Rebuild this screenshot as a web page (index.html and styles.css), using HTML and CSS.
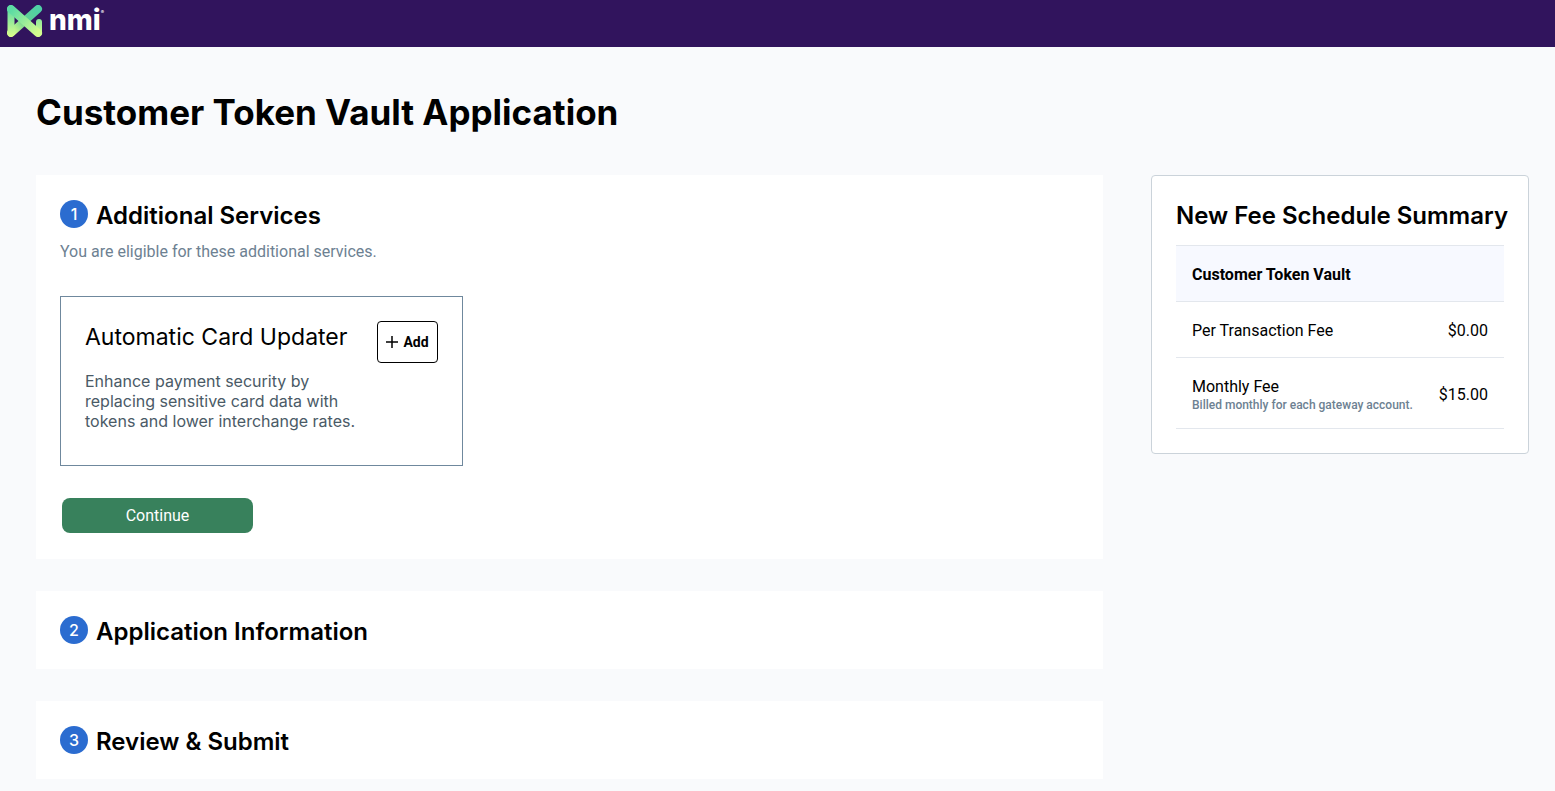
FILE: index.html
```html
<!DOCTYPE html>
<html lang="en">
<head>
    <meta charset="utf-8">
    <title>Customer Token Vault Application</title>
    <link rel="stylesheet" href="styles.css">
</head>
<body>
    <header class="topbar">
        <a class="logo" href="#">
            <svg class="logo-mark" viewBox="0 0 36 32" width="36" height="32" fill="none" stroke-linecap="round" aria-hidden="true">
                <defs>
                    <linearGradient id="down" gradientUnits="userSpaceOnUse" x1="0" y1="0" x2="0" y2="32">
                        <stop offset="0" stop-color="#4fd6a8"/>
                        <stop offset="1" stop-color="#ddff8c"/>
                    </linearGradient>
                    <linearGradient id="cross" gradientUnits="userSpaceOnUse" x1="5" y1="5" x2="31" y2="27">
                        <stop offset="0" stop-color="#5ddca4"/>
                        <stop offset="1" stop-color="#d2fc8e"/>
                    </linearGradient>
                    <linearGradient id="rise" gradientUnits="userSpaceOnUse" x1="31" y1="4" x2="5" y2="28">
                        <stop offset="0" stop-color="#4fd0a5"/>
                        <stop offset=".5" stop-color="#62cf93"/>
                        <stop offset="1" stop-color="#ddff8c"/>
                    </linearGradient>
                </defs>
                <path d="M32 17v11" stroke="url(#down)" stroke-width="6"/>
                <path d="M31 4L4 28" stroke="url(#rise)" stroke-width="8"/>
                <path d="M4 4v24" stroke="url(#down)" stroke-width="7"/>
                <path d="M4 4l27 24" stroke="url(#cross)" stroke-width="8"/>
            </svg>
            <span class="logo-text">nmi<sup>®</sup></span>
        </a>
    </header>

    <main class="page">
        <h1>Customer Token Vault Application</h1>
        <div class="columns">
            <div class="steps">
                <section class="step">
                    <h2 class="step-title"><span class="step-number">1</span>Additional Services</h2>
                    <p class="step-note">You are eligible for these additional services.</p>
                    <div class="service">
                        <div class="service-text">
                            <h3>Automatic Card Updater</h3>
                            <p>Enhance payment security by replacing sensitive card data with tokens and lower interchange rates.</p>
                        </div>
                        <button class="add" type="button">
                            <svg width="12" height="12" viewBox="0 0 12 12" stroke="#000" stroke-width="1.5" aria-hidden="true"><path d="M6 0v12M0 6h12"/></svg>
                            Add
                        </button>
                    </div>
                    <button class="continue" type="button">Continue</button>
                </section>
                <section class="step">
                    <h2 class="step-title"><span class="step-number">2</span>Application Information</h2>
                </section>
                <section class="step">
                    <h2 class="step-title"><span class="step-number">3</span>Review &amp; Submit</h2>
                </section>
            </div>

            <aside class="summary">
                <h2>New Fee Schedule Summary</h2>
                <table class="fees">
                    <thead>
                        <tr><th colspan="2">Customer Token Vault</th></tr>
                    </thead>
                    <tbody>
                        <tr>
                            <td>Per Transaction Fee</td>
                            <td class="amount">$0.00</td>
                        </tr>
                        <tr>
                            <td>Monthly Fee<small>Billed monthly for each gateway account.</small></td>
                            <td class="amount">$15.00</td>
                        </tr>
                    </tbody>
                </table>
            </aside>
        </div>
    </main>
</body>
</html>
```
FILE: styles.css
```css
* { box-sizing: border-box; margin: 0; padding: 0; }
body { background: #f9fafc; color: #000; font-family: Roboto, sans-serif; font-size: 16px; line-height: 24px; }
h1, h2, h3 { font-family: Inter, sans-serif; }
h1 { font-size: 35px; line-height: 48px; font-weight: 700; }
h2 { font-size: 24px; line-height: 32px; font-weight: 600; }
button { font-family: inherit; cursor: pointer; }

.topbar { background: #31145d; height: 47px; padding: 5px 7px; }
.logo { display: inline-flex; gap: 6px; color: #fff; text-decoration: none; }
.logo-text { font-family: Inter, sans-serif; font-size: 28px; line-height: 30px; font-weight: 800; }
.logo-text sup { font-size: 5px; line-height: 5px; vertical-align: 16px; }

.page { padding: 41px 26px 13px 36px; }
.columns { display: flex; align-items: flex-start; gap: 48px; margin-top: 39px; }

.steps { flex: 1; display: flex; flex-direction: column; gap: 32px; }
.step { background: #fff; padding: 25px 24px 21px; }
.step-title { display: flex; align-items: flex-start; gap: 8px; }
.step-number { width: 28px; height: 28px; border-radius: 50%; background: #2b6cd0; color: #fff; font-size: 16px; line-height: 28px; font-weight: 500; text-align: center; }
.step-note { color: #6d8192; margin-top: 8px; }

.service { display: flex; align-items: flex-start; justify-content: space-between; gap: 16px; width: 403px; height: 170px; margin-top: 32px; padding: 24px; border: 1px solid #6f889d; }
.service-text { width: 272px; font-family: Inter, sans-serif; }
.service h3 { font-size: 23px; line-height: 32px; font-weight: 400; white-space: nowrap; }
.service p { color: #4a5a66; font-size: 16px; line-height: 20px; margin-top: 18px; }
.add { display: flex; align-items: center; justify-content: center; gap: 5px; width: 61px; height: 42px; border: 1px solid #000; border-radius: 4px; background: #fff; color: #000; font-size: 14px; font-weight: 700; }
.continue { display: block; width: 191px; height: 35px; margin: 32px 2px 5px; border: 0; border-radius: 8px; background: #38815c; color: #fff; font-size: 16px; }

.summary { width: 378px; padding: 24px; background: #fff; border: 1px solid #cbd3da; border-radius: 4px; }
.summary h2 { white-space: nowrap; }
.fees { width: 100%; margin-top: 13px; border-collapse: collapse; }
.fees th, .fees td { padding: 17px 16px 15px; border-top: 1px solid #e3e7ed; border-bottom: 1px solid #e3e7ed; text-align: left; line-height: 23px; font-weight: 400; }
.fees th { background: #f7f9ff; font-weight: 700; }
.fees small { display: block; color: #6d8192; font-size: 12px; line-height: 15px; font-weight: 500; white-space: nowrap; }
.fees td.amount { padding-left: 0; text-align: right; }
```
